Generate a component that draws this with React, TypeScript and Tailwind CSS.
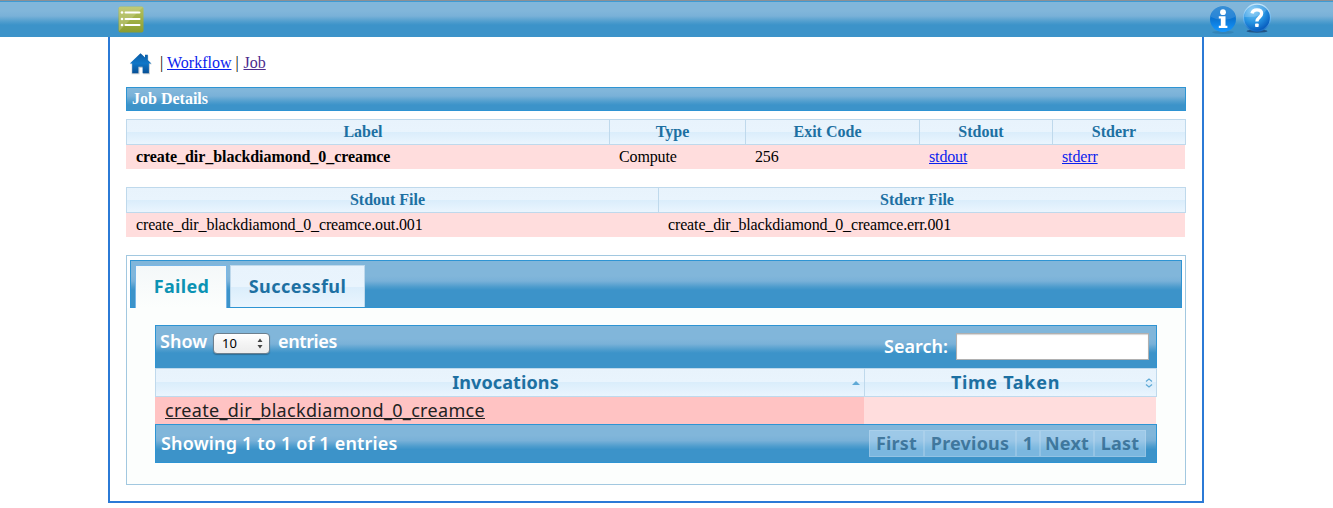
import React from "react";

const SERIF = "font-['Liberation_Serif',serif]";
const SANS = "font-['Noto_Sans',sans-serif]";
const GLOSS =
  "bg-[linear-gradient(to_bottom,#81b6da_calc(50%-8px),#79b1d8_calc(50%-3px),#4d9ccd_calc(50%+3px),#3c93c9_calc(50%+6px))]";
const LIGHT =
  "bg-[linear-gradient(to_bottom,#e8f3fc_0,#e9f4fd_50%,#daedfb_50%,#eaf5fe_100%)]";
const HEAD = `${LIGHT} border-y border-r border-[#bfd9ec] text-[#1d70a2] font-bold text-center`;
const PAGE_BUTTON =
  "border border-[#c9e2f3]/30 bg-[#b9dcf5]/50";

function ListIcon() {
  return (
    <svg width="26" height="27" viewBox="0 0 26 27">
      <defs>
        <linearGradient id="lg" x1="0" y1="0" x2="0" y2="1">
          <stop offset="0" stopColor="#b5c25f" />
          <stop offset="1" stopColor="#8b9d2f" />
        </linearGradient>
      </defs>
      <rect x="0.5" y="0.5" width="25" height="26" rx="2" fill="url(#lg)" />
      <path d="M1 1H25L1 25Z" fill="#d3dba0" opacity="0.35" />
      <g fill="#fff">
        <circle cx="4" cy="6.5" r="1.3" />
        <circle cx="4" cy="13" r="1.3" />
        <circle cx="4" cy="19" r="1.3" />
        <rect x="6.5" y="5.5" width="16" height="2" rx="1" />
        <rect x="6.5" y="12" width="16" height="2" rx="1" />
        <rect x="6.5" y="18" width="16" height="2" rx="1" />
      </g>
    </svg>
  );
}

function InfoIcon() {
  return (
    <svg width="28" height="30" viewBox="0 0 28 30">
      <defs>
        <linearGradient id="ig" x1="0" y1="0" x2="0" y2="1">
          <stop offset="0" stopColor="#1c7fd0" />
          <stop offset="0.5" stopColor="#0a74d2" />
          <stop offset="1" stopColor="#1597ff" />
        </linearGradient>
      </defs>
      <ellipse cx="14" cy="27.3" rx="11" ry="1.6" fill="#26648f" opacity="0.3" />
      <circle cx="14" cy="14" r="13" fill="url(#ig)" />
      <path d="M2 12A12 11.5 0 0 1 26 12Q14 18 2 12Z" fill="#fff" opacity="0.12" />
      <circle cx="14" cy="7.2" r="2.9" fill="#fff" />
      <path d="M9.8 11.3H16.5V20.8H18.4V23H9.8V20.8H11.8V13.5H9.8Z" fill="#fff" />
    </svg>
  );
}

function HelpIcon() {
  return (
    <svg width="30" height="30" viewBox="0 0 30 30">
      <defs>
        <radialGradient id="hg" cx="0.35" cy="0.25" r="0.85">
          <stop offset="0" stopColor="#7cc9f6" />
          <stop offset="0.5" stopColor="#2794e2" />
          <stop offset="0.85" stopColor="#0a62c2" />
          <stop offset="1" stopColor="#0a4ca8" />
        </radialGradient>
        <linearGradient id="hr" x1="0" y1="0" x2="0" y2="1">
          <stop offset="0" stopColor="#c4e6fa" />
          <stop offset="0.6" stopColor="#5fb0ec" />
          <stop offset="1" stopColor="#1467c0" />
        </linearGradient>
      </defs>
      <ellipse cx="15" cy="28.2" rx="10.5" ry="1.6" fill="#173f70" opacity="0.75" />
      <circle cx="15" cy="14.7" r="13.5" fill="url(#hg)" stroke="url(#hr)" strokeWidth="1.2" />
      <path d="M2.5 14A12.5 12.5 0 0 1 25 6.5Q20 15 2.5 14Z" fill="#fff" opacity="0.18" />
      <path
        d="M10 10.4C10.6 7.7 12.6 6.9 14.9 6.9C17.8 6.9 19.6 8.4 19.6 10.7C19.6 14.2 14.9 14.3 14.9 18.6"
        fill="none"
        stroke="#fff"
        strokeWidth="3.3"
      />
      <rect x="13.1" y="20.4" width="3.6" height="3.7" rx="0.8" fill="#fff" />
    </svg>
  );
}

function HomeIcon() {
  return (
    <svg width="24" height="24" viewBox="0 0 24 24">
      <defs>
        <linearGradient id="home" x1="0" y1="0" x2="0" y2="1">
          <stop offset="0" stopColor="#0a5aa2" />
          <stop offset="0.5" stopColor="#0f77c8" />
          <stop offset="1" stopColor="#074f95" />
        </linearGradient>
      </defs>
      <path
        d="M12.3 2L1.3 12.3H2.6V22.3H10.5V16H14.2V22.3H20.9V12.3H23L19.3 8.6V3.6H16.5V6Z"
        fill="#b4b9be"
        opacity="0.7"
      />
      <path
        d="M11.5 1.2L0.8 11.5H3.2V21.3H9.4V14.8H13.6V21.3H19.9V11.5H22.3L18.8 8V2.8H16V5.4Z"
        fill="url(#home)"
      />
    </svg>
  );
}

function SortIcon({ both }: { both?: boolean }) {
  return both ? (
    <svg width="8" height="10" viewBox="0 0 8 10" fill="none" stroke="#5fa9d6" strokeWidth="1.3">
      <path d="M1 3.6L4 1L7 3.6M1 6.4L4 9L7 6.4" />
    </svg>
  ) : (
    <svg width="8" height="4" viewBox="0 0 8 4">
      <path d="M0 4L4 0L8 4Z" fill="#5fa9d6" />
    </svg>
  );
}

const jobCols = "grid grid-cols-[483px_136px_174px_133px_133px]";
const fileCols = "grid grid-cols-[532px_527px]";

function DetailTable({ cols, heads, cells }: { cols: string; heads: string[]; cells: React.ReactNode[] }) {
  return (
    <div className="w-[1060px]">
      <div className={`${cols} h-[26px] border-l border-[#bfd9ec]`}>
        {heads.map((h) => (
          <div key={h} className={`${HEAD} pr-[10px] leading-[24px]`}>
            {h}
          </div>
        ))}
      </div>
      <div className={`${cols} h-6 w-[1059px] bg-[#ffdddd] leading-[24px] tracking-[-0.14px]`}>
        {cells.map((c, i) => (
          <div key={i} className="pl-[10px]">
            {c}
          </div>
        ))}
      </div>
    </div>
  );
}

export default function App() {
  return (
    <div className={`${SERIF} h-[508px] overflow-hidden bg-white text-[16px] text-black`}>
      <header
        className={`${GLOSS} flex h-[37px] items-start justify-between border-t border-[#8b8f94] pl-[118px] pr-[61px] pt-1 shadow-[inset_0_1px_0_#3f9bd3]`}
      >
        <span className="pt-px">
          <ListIcon />
        </span>
        <div className="flex gap-[5px]">
          <InfoIcon />
          <span className="-mt-[2px]">
            <HelpIcon />
          </span>
        </div>
      </header>

      <main className="ml-[108px] h-[466px] w-[1096px] border-x-2 border-b-2 border-[#2b7ad6] px-4">
        <nav className="flex h-[50px] items-center pl-[3px] pt-px">
          <span className="mr-[7px] mt-[2px] w-6">
            <HomeIcon />
          </span>
          <span className="w-[7px]">|</span>
          <a className="text-[#0a22ee] underline">Workflow</a>
          <span className="ml-1 w-[8px]">|</span>
          <a className="text-[#4b2a8c] underline">Job</a>
        </nav>

        <h1
          className={`${GLOSS} h-6 border border-[#2e94d3] pl-[5px] text-[16px] font-bold leading-[22px] text-white`}
        >
          Job Details
        </h1>

        <div className="mt-2">
          <DetailTable
            cols={jobCols}
            heads={["Label", "Type", "Exit Code", "Stdout", "Stderr"]}
            cells={[
              <b className="tracking-[-0.06px]">create_dir_blackdiamond_0_creamce</b>,
              "Compute",
              "256",
              <a className="text-[#0a22ee] underline">stdout</a>,
              <a className="text-[#0a22ee] underline">stderr</a>,
            ]}
          />
        </div>
        <div className="mt-[18px]">
          <DetailTable
            cols={fileCols}
            heads={["Stdout File", "Stderr File"]}
            cells={["create_dir_blackdiamond_0_creamce.out.001", "create_dir_blackdiamond_0_creamce.err.001"]}
          />
        </div>

        <section className={`${SANS} mt-[18px] h-[230px] border border-[#a2c8e0] bg-[#fcfefd] text-[18px]`}>
          <div className="h-[52px] bg-white px-[3px] pt-1">
            <div className={`${GLOSS} flex h-12 gap-[3px] border border-[#2e94d3] pl-1 pt-1 font-bold`}>
              <div className="h-[43px] w-[92px] border-x border-t border-[#79b7e7] bg-[linear-gradient(#f4f8f9,#fcfefd)] pl-px text-center leading-[41px] tracking-[0.3px] text-[#0b93b4]">
                Failed
              </div>
              <div
                className={`${LIGHT} h-[42px] w-[135px] border-x border-t border-[#bfd9ec] text-center leading-[41px] tracking-[0.45px] text-[#1d70a2]`}
              >
                Successful
              </div>
            </div>
          </div>

          <div className="ml-[28px] mt-[17px] w-[1002px]">
            <div
              className={`${GLOSS} flex h-[43px] justify-between border border-b-0 border-[#2e94d3] pl-1 pr-[7px] pt-[7px] font-semibold text-white`}
            >
              <div className="flex">
                <span className="leading-[17px]">Show</span>
                <div className="ml-[6px] flex h-[21px] w-[57px] items-center justify-between rounded-[4px] border border-[#6c7f8e] bg-[linear-gradient(#ffffff,#f4f4f4_50%,#ececec)] pl-2 pr-[6px] text-[13px] font-normal text-black shadow-[0_1px_1px_rgba(0,0,0,0.25)]">
                  <span>10</span>
                  <svg width="6" height="11" viewBox="0 0 6 11" fill="#444">
                    <path d="M0.5 4L3 0.5L5.5 4ZM0.5 7L3 10.5L5.5 7Z" />
                  </svg>
                </div>
                <span className="ml-2 leading-[17px] tracking-[-0.4px]">entries</span>
              </div>
              <div className="flex">
                <span className="mr-2 leading-[27px]">Search:</span>
                <input className="h-[27px] w-[193px] border border-[#b0b0b0] bg-white shadow-[inset_0_1px_1px_#d5d5d5]" />
              </div>
            </div>

            <div className="grid h-[29px] grid-cols-[709px_292px] border-l border-[#bfd9ec]">
              <div className={`${HEAD} flex items-center pl-[3px] pr-1`}>
                <span className="flex-1 tracking-[0.1px]">Invocations</span>
                <SortIcon />
              </div>
              <div className={`${HEAD} flex items-center pl-px pr-[3px]`}>
                <span className="flex-1 tracking-[0.7px]">Time Taken</span>
                <SortIcon both />
              </div>
            </div>

            <div className="grid h-[27px] grid-cols-[709px_292px] leading-[27px]">
              <div className="bg-[#ffc3c3] pl-[10px] text-[#222]">
                <a className="tracking-[0.32px] underline">create_dir_blackdiamond_0_creamce</a>
              </div>
              <div className="bg-[#ffdddd]" />
            </div>

            <div
              className={`${GLOSS} flex h-[39px] justify-between border border-[#2e94d3] pl-[5px] pr-[10px] pt-[5px] font-semibold text-white`}
            >
              <span className="leading-[27px] tracking-[0.18px]">Showing 1 to 1 of 1 entries</span>
              <div className="flex h-[27px] text-center font-bold leading-[25px] tracking-[0.2px] text-[#265f86]/75">
                <span className={`${PAGE_BUTTON} w-[55px]`}>First</span>
                <span className={`${PAGE_BUTTON} w-[92px]`}>Previous</span>
                <span className={`${PAGE_BUTTON} w-[24px]`}>1</span>
                <span className={`${PAGE_BUTTON} w-[54px]`}>Next</span>
                <span className={`${PAGE_BUTTON} w-[52px]`}>Last</span>
              </div>
            </div>
          </div>
        </section>
      </main>
    </div>
  );
}
